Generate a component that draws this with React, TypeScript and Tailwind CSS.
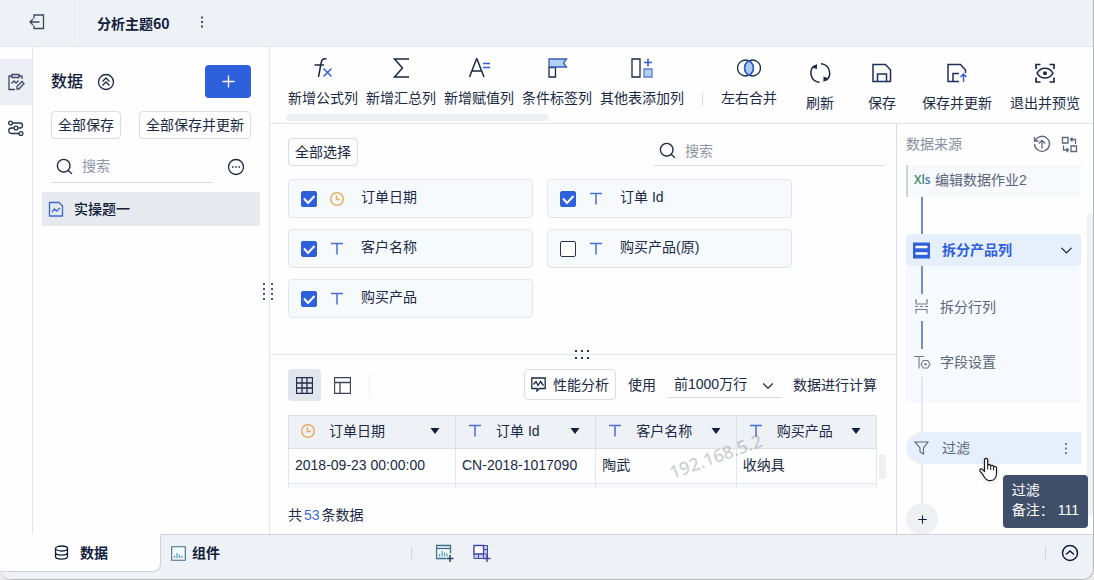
import React, { useState } from "react";
import { ChevronDown, Plus, Search } from "lucide-react";

type IconProps = {
  size?: number;
  className?: string;
  children: React.ReactNode;
};

const Icon = ({ size = 18, className = "", children }: IconProps) => (
  <svg
    width={size}
    height={size}
    viewBox={`0 0 ${size} ${size}`}
    fill="none"
    stroke="currentColor"
    strokeWidth={1.3}
    className={`shrink-0 ${className}`}
    aria-hidden="true">
    {children}
  </svg>
);

const TextType = () => (
  <Icon size={16} className="text-[#4a6fd6]">
    <path d="M2 2.500h12M8 2.500v11" strokeWidth={1.5} />
  </Icon>
);

const DateType = () => (
  <Icon size={16} className="text-[#e8ae5c]">
    <circle cx="8" cy="8" r="6.3" strokeWidth={1.5} />
    <path d="M7.500 4.500v4H11" strokeWidth={1.5} />
  </Icon>
);

const ChartAdd = () => (
  <Icon className="text-[#3b6f8c]">
    <path d="M14.500 9.500V1.500h-14v13H10" fill="#f3fafd" />
    <path d="M.5 4.500h14" />
    <path d="M3.500 12.500V10M6 12.500V7M8.500 12.500V8.500M11 12.500v-3" stroke="#5f9fc4" />
    <path d="M14 11v7M10.500 14.500h7" stroke="#1f4460" strokeWidth={1.500} />
  </Icon>
);

const LayoutAdd = () => (
  <Icon className="text-[#4247a5]">
    <path d="M1 1.500h13.500v13H1z" fill="#c9cdf0" strokeWidth={1} />
    <path d="M1 1.500h9.500V10H1z" fill="#fff" />
    <path d="M10.500 5.500h4M5.500 10v4.500M10.500 10v4.500M10.500 10h4" strokeWidth={1} />
    <path d="M14 11v7M10.500 14.500h7" strokeWidth={1.500} />
  </Icon>
);

const SaveShape = ({ arrow }: { arrow?: boolean }) => (
  <Icon size={24} className="text-[#1f2f5c]">
    {arrow ? (
      <>
        <path d="M14 20.500H3v-17h12.500l5 5.500v3" strokeWidth={1.500} />
        <path d="M8 20.500v-8h6" strokeWidth={1.500} />
        <path d="M18.500 21v-8M15.500 16l3-3 3 3" stroke="#2f60dc" strokeWidth={1.500} />
      </>
    ) : (
      <>
        <path d="M3 3.500h12.500l5 5.500v11.500H3z" strokeWidth={1.500} />
        <path d="M7.500 20.500v-7.500h9v7.500" strokeWidth={1.500} />
      </>
    )}
  </Icon>
);

const columnTools = [
  {
    name: "新增公式列",
    icon: (
      <Icon size={24}>
        <path d="M15.500 3c-3.500-1-4.800.5-5.400 4L7.500 21M3.500 9h9.500" strokeWidth={1.500} />
        <path d="M12.500 12.500l8 8M20.500 12.500l-8 8" stroke="#2f60dc" strokeWidth={1.500} />
      </Icon>
    ),
  },
  {
    name: "新增汇总列",
    icon: (
      <Icon size={24}>
        <path d="M20 3H5.500l8 9-8 9H20" strokeWidth={1.500} />
      </Icon>
    ),
  },
  {
    name: "新增赋值列",
    icon: (
      <Icon size={24}>
        <path d="M2.500 21L9.500 3h.5l7 18M5 15h9.500" strokeWidth={1.500} />
        <path d="M16 7.500h7M16 11.500h7" stroke="#2f60dc" strokeWidth={1.500} />
      </Icon>
    ),
  },
  {
    name: "条件标签列",
    icon: (
      <Icon size={24}>
        <path d="M4 11.500h6.500V21H4z" />
        <path d="M4 3h17.500l-3 4 3 4H4z" fill="#b4d0f2" stroke="#3a5cb8" />
      </Icon>
    ),
  },
  {
    name: "其他表添加列",
    icon: (
      <Icon size={24}>
        <path d="M2 3h8v18H2z" />
        <path d="M18 2.500v8M14 6.500h8" stroke="#2f60dc" strokeWidth={1.500} />
        <path d="M14 13h8v8h-8z" fill="#b4d0f2" stroke="#5a80cc" />
      </Icon>
    ),
  },
];

const actionTools = [
  {
    name: "刷新",
    icon: (
      <Icon size={24}>
        <path d="M11.500 21.300A9.300 9.300 0 0 1 7 4.300M13 2.700a9.300 9.300 0 0 1 4.500 17" strokeWidth={1.500} />
        <path d="M3.500 6.500L9 3v5zM20.500 17.500L15.500 21v-5.500z" fill="currentColor" stroke="none" />
      </Icon>
    ),
  },
  { name: "保存", icon: <SaveShape /> },
  { name: "保存并更新", icon: <SaveShape arrow /> },
  {
    name: "退出并预览",
    icon: (
      <Icon size={24}>
        <path d="M3 8V3.500h4.500M16.500 3.500H21V8M21 16.500V21h-4.500M7.500 21H3v-4.500" strokeWidth={1.700} />
        <path d="M4 12.200c4-6.500 12-6.500 16 0-4 6.500-12 6.500-16 0z" strokeWidth={1.500} />
        <circle cx="12" cy="12.200" r="2" fill="currentColor" stroke="none" />
      </Icon>
    ),
  },
];

const fields = [
  { id: "date", name: "订单日期", type: "date", checked: true },
  { id: "order", name: "订单 Id", type: "text", checked: true },
  { id: "customer", name: "客户名称", type: "text", checked: true },
  { id: "origin", name: "购买产品(原)", type: "text", checked: false },
  { id: "product", name: "购买产品", type: "text", checked: true },
];

const columns = [
  { name: "订单日期", type: "date" },
  { name: "订单 Id", type: "text" },
  { name: "客户名称", type: "text" },
  { name: "购买产品", type: "text" },
];

const rows = [
  ["2018-09-23 00:00:00", "CN-2018-1017090", "陶武", "收纳具"],
  ["", "", "", ""],
];

const ToolButton = ({ name, icon }: { name: string; icon: React.ReactNode }) => (
  <button className="flex min-w-11 shrink-0 flex-col items-center gap-2 whitespace-nowrap">
    {icon}
    <span>{name}</span>
  </button>
);

const Header = () => (
  <header className="flex h-[47px] shrink-0 items-stretch border-b border-[#e1e6ee] bg-[#eef1f5]">
    <button aria-label="返回" className="flex w-[75px] items-center justify-center border-r border-[#e4e8ef] pb-[2px]">
      <Icon size={16} className="text-[#3c4a60]">
        <path d="M5 4.500V1h9.500v13.500H5v-3M10.500 8H1M4 5L1 8l3 3" />
      </Icon>
    </button>
    <h1 className="flex items-center pl-[22px] font-['Noto_Sans_CJK_SC',sans-serif] text-sm font-bold text-[#10203c]">
      分析主题60
    </h1>
    <button aria-label="更多" className="ml-6 flex items-center pb-[2px]">
      <Icon size={16} className="text-[#3c4a60]">
        <path d="M8 2.500v2M8 7v2M8 11.500v2" strokeWidth={2} />
      </Icon>
    </button>
  </header>
);

const Rail = () => (
  <nav className="flex w-[33px] shrink-0 flex-col border-r border-[#e1e6ee] pt-3">
    <button aria-label="分析" className="flex h-[46px] items-center justify-center bg-[#eceff5]">
      <Icon className="text-[#3c4a60]">
        <path d="M5 3H2v13.500h6M12 3h3v3" />
        <path d="M5 1.500h7v3H5zM4.500 10.500L7 8l2 2 2.500-2.500" />
        <path d="M10 13.500l5-5 2 2-5 5.500H10z" />
      </Icon>
    </button>
    <button aria-label="血缘" className="flex h-[46px] items-center justify-center">
      <Icon className="text-[#26344e]">
        <circle cx="3.500" cy="4" r="1.900" />
        <circle cx="9" cy="9" r="1.900" />
        <circle cx="14" cy="14.500" r="1.900" />
        <path d="M5.500 4H13a2.500 2.500 0 0 1 0 5h-2M7 9H4.500a2.750 2.750 0 0 0 0 5.500H12" />
      </Icon>
    </button>
  </nav>
);

const Sidebar = () => (
  <aside className="relative w-[237px] shrink-0 border-r border-[#e1e6ee] pt-[18px]">
    <div className="px-[18px]">
      <div className="flex h-[33px] items-center">
        <h2 className="text-base font-medium text-[#10203c]">数据</h2>
        <button aria-label="收起" className="ml-[14px]">
          <Icon>
            <circle cx="9" cy="9" r="7.500" />
            <path d="M5.500 8.500L9 5l3.500 3.500M5.500 12.500L9 9l3.500 3.500" />
          </Icon>
        </button>
        <button
          aria-label="新增"
          className="ml-auto flex h-[33px] w-[46px] items-center justify-center rounded-sm bg-[#2f60dc] text-white">
          <Plus size={19} strokeWidth={1.75} />
        </button>
      </div>
      <div className="mt-[13px] flex justify-between">
        <button className="h-7 rounded-sm border border-[#d9dce2] px-[6px]">全部保存</button>
        <button className="h-7 rounded-sm border border-[#d9dce2] px-[6px]">全部保存并更新</button>
      </div>
      <div className="mt-[11px] flex items-center">
        <label className="flex h-[33px] w-[162px] items-center gap-2 border-b border-[#d9dce2] pl-1">
          <Search size={19} strokeWidth={1.75} className="shrink-0" />
          <input
            type="text"
            aria-label="搜索数据"
            placeholder="搜索"
            className="w-full min-w-0 outline-none placeholder:text-[#8d96a6]"
          />
        </label>
        <button aria-label="更多操作" className="ml-[14px]">
          <Icon>
            <circle cx="9" cy="9" r="7.500" />
            <path d="M5 9h1.500M8.250 9h1.500M11.500 9H13" strokeWidth={1.600} />
          </Icon>
        </button>
      </div>
    </div>
    <button className="mx-[9px] mt-[9px] flex h-[34px] w-[218px] items-center gap-2.5 bg-[#e6e9ed] pl-[6px] text-left font-medium text-[#10203c]">
      <Icon size={16} className="text-[#3f68d0]">
        <path d="M1.500 1.500h9.500l3.500 3.500v10h-13zM4 11l2.500-3 2 2L12 7" />
      </Icon>
      实操题一
    </button>
    <div className="absolute top-[236px] -right-[4px] z-10 grid grid-cols-2 gap-x-[6px] gap-y-[3px]">
      {Array.from({ length: 8 }).map((_, i) => (
        <span key={i} className="size-[2px] bg-[#4a566c]" />
      ))}
    </div>
  </aside>
);

const Toolbar = () => (
  <div className="flex h-[77px] shrink-0 border-b border-[#e1e4e9]">
    <div className="shrink-0 pt-[9px] pl-4">
      <div className="flex pl-[2px]">
        <div className="flex gap-2">
          {columnTools.map((t) => (
            <ToolButton key={t.name} name={t.name} icon={t.icon} />
          ))}
        </div>
        <span className="mx-[18px] mb-[2px] h-[13px] w-px self-end bg-[#d5d9e0]" />
        <ToolButton
          name="左右合并"
          icon={
            <Icon size={24}>
              <path d="M12 4.800a8 8 0 0 1 0 14.400 8 8 0 0 1 0-14.400z" fill="#a9cbf2" stroke="none" />
              <circle cx="8.500" cy="12" r="8" />
              <circle cx="15.500" cy="12" r="8" />
              <path d="M12 4.800a8 8 0 0 1 0 14.400 8 8 0 0 1 0-14.400z" stroke="#2f60dc" />
            </Icon>
          }
        />
      </div>
      <div className="mt-[6px] h-[7px] w-[262px] rounded-sm bg-[#eeeff3]" />
    </div>
    <div className="ml-auto flex gap-[18px] pt-[14px] pr-[13px]">
      {actionTools.map((t) => (
        <ToolButton key={t.name} name={t.name} icon={t.icon} />
      ))}
    </div>
  </div>
);

const FieldList = () => {
  const [items, setItems] = useState(fields);

  const toggle = (id: string) =>
    setItems(items.map((f) => (f.id === id ? { ...f, checked: !f.checked } : f)));

  const selectAll = () => setItems(items.map((f) => ({ ...f, checked: true })));

  return (
    <section className="relative shrink-0 border-b border-[#e1e6ee] pt-[14px] pr-3 pb-9 pl-[18px]">
      <div className="flex justify-between">
        <button onClick={selectAll} className="h-7 rounded-sm border border-[#d9dce2] px-[6px]">
          全部选择
        </button>
        <label className="flex h-7 w-[230px] items-center gap-2 border-b border-[#d9dce2] pb-[2px] pl-1">
          <Search size={19} strokeWidth={1.75} className="shrink-0" />
          <input
            type="text"
            aria-label="搜索字段"
            placeholder="搜索"
            className="w-full min-w-0 outline-none placeholder:text-[#8d96a6]"
          />
        </label>
      </div>
      <div className="mt-[13px] grid grid-cols-[repeat(auto-fill,245px)] gap-x-[14px] gap-y-[11px]">
        {items.map((f) => (
          <label
            key={f.id}
            className="flex h-[39px] items-center rounded-sm border border-[#e1e6ee] bg-[#f7fafd] pl-3">
            <span className="relative size-4">
              <input
                type="checkbox"
                checked={f.checked}
                onChange={() => toggle(f.id)}
                className="peer block size-4 appearance-none rounded-[2px] border border-[#26344e] bg-white checked:border-[#2f60dc] checked:bg-[#2f60dc]"
              />
              <svg
                viewBox="0 0 16 16"
                className="pointer-events-none absolute inset-0 hidden text-white peer-checked:block"
                fill="none"
                stroke="currentColor"
                strokeWidth={2}>
                <path d="M3 7.500l4 4.500 6.500-7" />
              </svg>
            </span>
            <span className="mr-4 ml-3">{f.type === "date" ? <DateType /> : <TextType />}</span>
            <span className="pb-[3px]">{f.name}</span>
          </label>
        ))}
      </div>
      <div className="absolute -bottom-[5px] left-1/2 z-10 -ml-2 grid grid-cols-3 gap-x-1 gap-y-[5px]">
        {Array.from({ length: 6 }).map((_, i) => (
          <span key={i} className="size-[2px] bg-[#26344e]" />
        ))}
      </div>
    </section>
  );
};

const Preview = () => (
  <section className="flex flex-1 flex-col pt-[14px] pr-[19px] pl-[18px]">
    <div className="flex h-8 items-center">
      <button aria-label="表格" className="flex h-8 w-[33px] items-center justify-center rounded-sm bg-[#e2e5ee]">
        <Icon size={17} className="text-[#222c42]">
          <path d="M.5.5h16v16H.5zM.5 6h16M.5 11h16M6 .5v16M11 .5v16" />
        </Icon>
      </button>
      <button aria-label="布局" className="ml-[13px]">
        <Icon size={17} className="text-[#3b455a]">
          <path d="M.5.5h16v16H.5zM.5 5.500h16M6 5.500v11" />
        </Icon>
      </button>
      <span className="ml-[18px] h-6 w-px bg-[#eceff3]" />
      <button className="mb-px ml-auto flex h-[31px] items-center gap-[7px] rounded-sm border border-[#dadde3] px-[6px]">
        <Icon size={15}>
          <path d="M.8 1h13.400v10.500H8.500L6 14v-2.500H.8zM2.500 7.500L5 4.500l2 4 2.500-4 3 4" />
        </Icon>
        性能分析
      </button>
      <label className="mb-px ml-3 flex items-center gap-[11px]">
        使用
        <span className="relative">
          <select className="h-[27px] w-[115px] appearance-none border-b border-[#d5d9e0] pl-[7px] outline-none">
            <option>前1000万行</option>
          </select>
          <ChevronDown
            size={18}
            strokeWidth={1.5}
            className="pointer-events-none absolute top-[6px] right-[5px]"
          />
        </span>
      </label>
      <span className="mb-px ml-[11px]">数据进行计算</span>
    </div>
    <div className="relative mt-[14px]">
      <div className="h-[73px] overflow-hidden">
        <table className="w-full table-fixed border-collapse">
          <thead>
            <tr className="h-[33px] bg-[#eef1f5]">
              {columns.map((c) => (
                <th
                  key={c.name}
                  className="border border-[#dbe0e8] p-0 pb-[2px] font-normal first:w-[167px]">
                  <div className="flex items-center pr-[15px] pl-[11px] text-left">
                    {c.type === "date" ? <DateType /> : <TextType />}
                    <span className="ml-[13px] flex-1">{c.name}</span>
                    <svg width="10" height="6" viewBox="0 0 10 6" fill="#10203c">
                      <path d="M.5 0h9L5 6z" />
                    </svg>
                  </div>
                </th>
              ))}
            </tr>
          </thead>
          <tbody>
            {rows.map((row, r) => (
              <tr key={r} className="h-[35px] even:bg-[#f7fafd]">
                {row.map((cell, i) => (
                  <td key={i} className="border border-[#e1e6ee] p-0 pb-[2px] pl-[6px] whitespace-nowrap">
                    {cell}
                  </td>
                ))}
              </tr>
            ))}
          </tbody>
        </table>
      </div>
      <div className="absolute top-[39px] -right-[9px] h-[25px] w-[7px] rounded-sm bg-[#f0f0f4]" />
      <span className="pointer-events-none absolute top-[31px] left-[379px] -rotate-[20deg] font-['Open_Sans',sans-serif] text-lg leading-5 font-semibold text-[#5a6472]/30">
        192.168.5.2
      </span>
    </div>
    <p className="mt-[17px]">
      共<span className="mx-[2px] text-[#3f68d0]">53</span>条数据
    </p>
  </section>
);

const Connector = ({ className }: { className: string }) => (
  <span className={`ml-[15px] block w-[2px] shrink-0 ${className}`} />
);

const SourcePanel = () => (
  <aside className="relative flex w-[197px] shrink-0 flex-col overflow-hidden border-l border-[#d9dde3] pr-3 pl-[9px] text-[#5a667a]">
    <div className="flex h-10 shrink-0 items-center text-[#8590a2]">
      <h2 className="text-sm">数据来源</h2>
      <button aria-label="更新" className="ml-auto text-[#5a667a]">
        <Icon>
          <path d="M2.500 5a7.500 7.500 0 1 1-1 4M1.500 2v4h4M9 13.500V5.500M5.800 8.500L9 5.300l3.200 3.200" />
        </Icon>
      </button>
      <button aria-label="切换" className="mr-[3px] ml-[10px] text-[#5a667a]">
        <Icon size={17}>
          <path d="M1.500 1.500H7V7H1.500zM10 10h5.500v5.500H10zM9.500 3.500h5V8M11.500 1.500l-2 2 2 2M2.500 9.500v4.500h5M5.500 12l2 2-2 2" />
        </Icon>
      </button>
    </div>
    <div className="mt-px flex h-8 shrink-0 items-center border-l-2 border-[#d0d4da] bg-[#f7f9fd] pb-[2px] pl-[6px]">
      <span className="w-[21px] font-['Open_Sans',sans-serif] text-xs font-semibold text-[#358a62]">
        Xl<span className="text-[#3c78b0]">s</span>
      </span>
      编辑数据作业2
    </div>
    <Connector className="h-[37px] bg-[#6f8fc8]" />
    <button className="flex h-8 shrink-0 items-center rounded bg-[#e6f0fc] pr-[5px] pl-[7px] text-left font-bold text-[#2f60dc]">
      <Icon size={17}>
        <path d="M0 .5h17v16H0z" fill="#2f60dc" stroke="none" />
        <path d="M2.500 5h12M2.500 11.500h12" stroke="#fff" strokeWidth={2.500} />
      </Icon>
      <span className="ml-3 flex-1">拆分产品列</span>
      <ChevronDown size={19} strokeWidth={1.5} className="text-[#10203c]" />
    </button>
    <div className="shrink-0 rounded-b bg-[#f6fafe]">
      <Connector className="h-7 bg-[#6f8fc8]" />
      <div className="flex h-[27px] items-center gap-[11px] pb-[2px] pl-2">
        <Icon size={15} className="text-[#6f7b8c]">
          <path d="M2 1v4h11V1M1 7.500h3M6 7.500h3M11 7.500h3M2 14.500V10.500h11v4M1 1h2M12 1h2" strokeWidth={1.1} />
        </Icon>
        拆分行列
      </div>
      <Connector className="h-7 bg-[#6f8fc8]" />
      <div className="flex h-7 items-center gap-[9px] pb-[2px] pl-2">
        <Icon size={17} className="text-[#6f7b8c]">
          <path d="M0 2.500h10M5 2.500v12" strokeWidth={1.1} />
          <path d="M9.300 6.500h4.400l2.300 3.700-2.300 3.800H9.300L7 10.200z" strokeWidth={1.1} />
          <circle cx="11.500" cy="10.200" r="1.200" fill="currentColor" stroke="none" />
        </Icon>
        字段设置
      </div>
      <Connector className="h-[26px] bg-[#e6e8f1]" />
    </div>
    <Connector className="h-[29px] bg-[#e6e8f1]" />
    <div className="relative flex h-8 shrink-0 items-center rounded-l-full rounded-r bg-[#e6f0fc] pr-[7px] pl-2">
      <Icon size={16}>
        <path d="M1 2h13L9.500 8v6L6 12V8z" strokeWidth={1.1} />
      </Icon>
      <span className="ml-3 flex-1">过滤</span>
      <button aria-label="过滤操作">
        <Icon size={16}>
          <path d="M8 3v2M8 7.500v2M8 12v2" strokeWidth={1.600} />
        </Icon>
      </button>
      <svg
        width="24"
        height="26"
        viewBox="0 0 24 26"
        className="absolute top-[25px] left-[72px] z-20 drop-shadow-sm"
        fill="#fff"
        stroke="#1a1a1a"
        strokeWidth={1.2}
        strokeLinejoin="round">
        <path d="M6.500 14.500V3c0-2.300 3.200-2.300 3.200 0v5.500c.5-1.300 2.900-1.100 3 .5.600-1 2.700-.8 2.900.8.900-.8 2.900-.3 2.900 1.400v5c0 4-2 7.500-6.300 7.500-3.500 0-5-2-6.700-5L2 13.800c-.6-1.600 1.200-2.600 2.400-1.500z" />
        <path d="M9.700 8.500v4M12.700 9v4M15.600 10v3.500" fill="none" strokeWidth={1} />
      </svg>
      <div
        role="tooltip"
        className="absolute top-[43px] -right-[7px] z-10 rounded-sm bg-[#3f4f69] px-[9px] pt-[5px] pb-2 whitespace-nowrap text-white">
        <p>过滤</p>
        <p>备注： 111</p>
      </div>
    </div>
    <Connector className="h-[39px] bg-[#e6e8f1]" />
    <button
      aria-label="添加步骤"
      className="flex size-8 shrink-0 items-center justify-center rounded-full bg-[#eef0f4] text-[#10203c]">
      <Plus size={13} strokeWidth={2} />
    </button>
    <div className="absolute top-[89px] right-0 h-[303px] w-[6px] rounded-sm bg-[#f0f0f3]" />
  </aside>
);

const BottomBar = () => (
  <footer className="flex h-[45px] shrink-0 items-start border-t border-[#ccd3dc] bg-[#eef1f5] text-[#10203c]">
    <button className="-mt-px flex h-[38px] w-[161px] items-center gap-[11px] rounded-br-lg border-r border-b border-[#ccd3dc] bg-[#fefefe] pl-[54px] font-bold">
      <Icon size={15}>
        <ellipse cx="7.500" cy="3.500" rx="6" ry="2.500" />
        <path d="M1.500 3.500v8c0 3.400 12 3.400 12 0v-8M1.500 7.500c0 3.400 12 3.400 12 0" />
      </Icon>
      数据
    </button>
    <div className="flex h-9 flex-1 items-center pr-[14px] pl-[10px]">
      <button className="flex w-60 items-center gap-[6px] font-bold">
        <Icon size={15} className="text-[#3b6f8c]">
          <path d="M.7.700h13.600v13.600H.7z" fill="#f3fafd" strokeWidth={1.1} />
          <path d="M3.500 12V9.500M6 12V7M8.500 12V8.500M11 12v-2" stroke="#5f9fc4" />
        </Icon>
        组件
      </button>
      <span className="h-3 w-px bg-[#cdd3dc]" />
      <button aria-label="新增组件" className="ml-6">
        <ChartAdd />
      </button>
      <button aria-label="新增仪表板" className="ml-[19px]">
        <LayoutAdd />
      </button>
      <span className="ml-auto h-3 w-px bg-[#cdd3dc]" />
      <button aria-label="展开" className="ml-[15px]">
        <Icon>
          <circle cx="9" cy="9" r="7.500" strokeWidth={1.500} />
          <path d="M5 10.500l4-3.500 4 3.500" strokeWidth={1.500} />
        </Icon>
      </button>
    </div>
  </footer>
);

const App = () => (
  <div className="h-screen bg-[#e9e9ea]">
    <div className="flex h-full flex-col overflow-hidden rounded-b-xl border-r border-b border-[#b4b6ba] bg-[#fefefe] font-['Liberation_Sans','Noto_Sans_CJK_SC',sans-serif] text-sm text-[#1a2945]">
      <Header />
      <div className="flex min-h-0 flex-1">
        <Rail />
        <Sidebar />
        <main className="flex min-w-0 flex-1 flex-col">
          <Toolbar />
          <div className="flex min-h-0 flex-1">
            <div className="flex min-w-0 flex-1 flex-col">
              <FieldList />
              <Preview />
            </div>
            <SourcePanel />
          </div>
        </main>
      </div>
      <BottomBar />
    </div>
  </div>
);

export default App;
